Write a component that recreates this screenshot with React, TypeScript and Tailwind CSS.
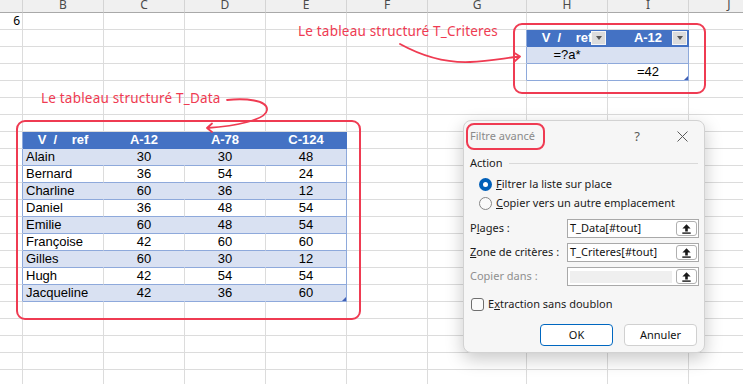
import React from "react";

const letters = ["", "B", "C", "D", "E", "F", "G", "H", "I", "J"];
const rows = Array.from({ length: 22 }, (_, i) => i + 6);

const people: [string, number, number, number][] = [
  ["Alain", 30, 30, 48],
  ["Bernard", 36, 54, 24],
  ["Charline", 60, 36, 12],
  ["Daniel", 36, 48, 54],
  ["Emilie", 60, 48, 54],
  ["Françoise", 42, 60, 60],
  ["Gilles", 60, 30, 12],
  ["Hugh", 42, 54, 54],
  ["Jacqueline", 42, 36, 60],
];

const dataHeads = ["V  /    ref", "A-12", "A-78", "C-124"];

function Dropdown() {
  return (
    <span className="absolute right-[1px] top-[1px] flex h-[14px] w-[15px] items-center justify-center border border-[#f6f6f6] bg-[#dcdcdc]">
      <span className="h-0 w-0 border-x-[3.5px] border-t-[4px] border-x-transparent border-t-[#555]" />
    </span>
  );
}

function Handle() {
  return (
    <span className="absolute bottom-0 right-0 h-0 w-0 border-b-[4px] border-l-[4px] border-b-[#3F5FB5] border-l-transparent" />
  );
}

function Cell({ r, c }: { r: number; c: number }) {
  const dataHeader = r === 13 && c >= 1 && c <= 4;
  const dataBody = r >= 14 && r <= 22 && c >= 1 && c <= 4;
  const critHeader = r === 7 && (c === 7 || c === 8);
  const critBody = (r === 8 || r === 9) && (c === 7 || c === 8);
  const banded = (dataBody && (r - 14) % 2 === 0) || (critBody && r === 8);
  const lastCol = (dataBody && c === 4) || (critBody && c === 8);
  const tableLeft = (c === 0 && r >= 13 && r <= 22) || (c === 6 && r >= 7 && r <= 9);

  let cls = "relative flex h-[17px] items-center overflow-hidden whitespace-pre border-b border-r ";
  if (dataHeader || critHeader) cls += "justify-center border-[#4472C4] bg-[#4472C4] font-bold text-white";
  else if (banded)
    cls += lastCol
      ? "border-b-[#8EA9DB] border-r-[#8EA9DB] bg-[#D9E1F2]"
      : "border-b-[#8EA9DB] border-r-[#D9E1F2] bg-[#D9E1F2]";
  else if (dataBody || critBody)
    cls += lastCol
      ? "border-b-[#8EA9DB] border-r-[#8EA9DB] bg-white"
      : "border-b-[#8EA9DB] border-r-[#dcdcdc] bg-white";
  else if (tableLeft) cls += "border-b-[#dcdcdc] border-r-[#8EA9DB] bg-white";
  else cls += "border-[#dcdcdc] bg-white";

  let content: React.ReactNode = null;
  if (c === 0 && r === 6) {
    content = (
      <span className="w-full pr-[2px] text-right font-['Noto_Sans',sans-serif] text-[12px] text-black">6</span>
    );
  } else if (dataHeader) {
    content = dataHeads[c - 1];
  } else if (dataBody) {
    const row = people[r - 14];
    content =
      c === 1 ? (
        <span className="w-full pl-[3px]">{row[0]}</span>
      ) : (
        <span className="w-full text-center">{row[c - 1]}</span>
      );
  } else if (critHeader) {
    content = c === 7 ? "V  /    ref" : "A-12";
  } else if (r === 8 && c === 7) {
    content = <span className="w-full text-center">=?a*</span>;
  } else if (r === 9 && c === 8) {
    content = <span className="w-full text-center">=42</span>;
  }

  return (
    <div className={cls}>
      {content}
      {critHeader && <Dropdown />}
      {((r === 22 && c === 4) || (r === 9 && c === 8)) && <Handle />}
    </div>
  );
}

function UpIcon() {
  return (
    <svg width="9" height="10" viewBox="0 0 9 10">
      <path d="M4.5 0.3 L8.6 4.6 H5.8 V7.4 H3.2 V4.6 H0.4 Z" fill="#1a1a1a" />
      <rect x="0.3" y="8.4" width="8.4" height="1.4" fill="#1a1a1a" />
    </svg>
  );
}

function Field({ value, disabled }: { value?: string; disabled?: boolean }) {
  return (
    <div className="flex h-[19px] w-[132px] items-center border border-[#a9a9a9] bg-white">
      {disabled ? (
        <span className="ml-[2px] h-[12px] w-[102px] bg-[#efefef]" />
      ) : (
        <span className="pl-[2px] text-[#111]">{value}</span>
      )}
      <span className="ml-auto mr-[1px] flex h-[15px] w-[21px] items-center justify-center rounded-[3px] border border-[#b0b0b0] bg-white">
        <UpIcon />
      </span>
    </div>
  );
}

function Dialog() {
  return (
    <div className="absolute left-[463px] top-[120px] flex h-[233px] w-[242px] flex-col rounded-[8px] border border-[#d2d2d2] bg-[#f6f6f6] font-['Noto_Sans',sans-serif] text-[11px] text-[#1b1b1b] shadow-[0_6px_18px_rgba(0,0,0,0.22)]">
      <div className="flex h-[30px] items-start pl-[2px] pt-[2px]">
        <div className="flex h-[27px] w-[79px] items-center rounded-[8px] border-2 border-[#EF3B52] pl-[2px] text-[#8a8a8a]">
          Filtre avancé
        </div>
        <span className="ml-[82px] flex h-[27px] w-[20px] items-center justify-center text-[13px] text-[#5a5a5a]">?</span>
        <span className="ml-[25px] flex h-[27px] w-[20px] items-center justify-center">
          <svg width="11" height="11" viewBox="0 0 11 11">
            <path d="M0.5 0.5 L10.5 10.5 M10.5 0.5 L0.5 10.5" stroke="#5a5a5a" strokeWidth="1" />
          </svg>
        </span>
      </div>

      <div className="flex flex-col pl-[6px]">
        <div className="mt-[4px] flex h-[16px] items-center">
          <span>Action</span>
          <span className="ml-[6px] mr-[6px] h-px flex-1 bg-[#d9d9d9]" />
        </div>

        <div className="mt-[4px] flex flex-col pl-[9px]">
          <div className="flex h-[19px] items-center gap-[4px]">
            <span className="flex h-[13px] w-[13px] items-center justify-center rounded-full bg-[#005FB8]">
              <span className="h-[5px] w-[5px] rounded-full bg-white" />
            </span>
            <span>
              <span className="underline">F</span>iltrer la liste sur place
            </span>
          </div>
          <div className="flex h-[19px] items-center gap-[4px]">
            <span className="h-[13px] w-[13px] rounded-full border border-[#868686] bg-[#fafafa]" />
            <span>
              <span className="underline">C</span>opier vers un autre emplacement
            </span>
          </div>
        </div>

        <div className="mt-[6px] flex flex-col gap-[5px]">
          <div className="flex items-center">
            <span className="w-[97px]">
              P<span className="underline">l</span>ages :
            </span>
            <Field value="T_Data[#tout]" />
          </div>
          <div className="flex items-center">
            <span className="w-[97px]">
              <span className="underline">Z</span>one de critères :
            </span>
            <Field value="T_Criteres[#tout]" />
          </div>
          <div className="flex items-center">
            <span className="w-[97px] text-[#8f8f8f]">Copier dans :</span>
            <Field disabled />
          </div>
        </div>

        <div className="mt-[9px] flex h-[19px] items-center gap-[4px] pl-[1px]">
          <span className="h-[13px] w-[13px] rounded-[3px] border border-[#6f6f6f] bg-[#fbfbfb]" />
          <span>
            E<span className="underline">x</span>traction sans doublon
          </span>
        </div>
      </div>

      <div className="mt-[10px] flex justify-end gap-[11px] pr-[7px]">
        <button className="h-[22px] w-[73px] rounded-[4px] border border-[#0067C0] bg-white text-[#111]">OK</button>
        <button className="h-[22px] w-[73px] rounded-[4px] border border-[#d0d0d0] bg-white text-[#111]">Annuler</button>
      </div>
    </div>
  );
}

export default function App() {
  return (
    <div className="relative h-[384px] w-[743px] overflow-hidden bg-white font-['Liberation_Sans',Arial,sans-serif] text-[13px] text-black">
      <div className="grid grid-cols-[23px_81px_81px_81px_81px_81px_99px_81px_81px_81px]">
        {letters.map((l, i) => (
          <div
            key={"h" + i}
            className="flex h-[13px] items-start justify-center overflow-hidden border-b border-r border-b-[#a9a9a9] border-r-[#d4d4d4] bg-[#f0f0f0] font-['Noto_Sans',sans-serif] text-[12px] leading-[9px] text-[#4a4a4a]"
          >
            {l}
          </div>
        ))}
        {rows.map((r) => letters.map((_, c) => <Cell key={r + "-" + c} r={r} c={c} />))}
      </div>

      {/* annotations */}
      <div className="absolute left-[16px] top-[120px] h-[200px] w-[345px] rounded-[9px] border-2 border-[#EF3B52]" />
      <div className="absolute left-[513px] top-[23px] h-[71px] w-[193px] rounded-[9px] border-2 border-[#EF3B52]" />
      <div className="absolute left-[41px] top-[89px] font-['Noto_Sans',sans-serif] text-[13.5px] leading-[18px] tracking-[0.2px] text-[#EF3B52]">
        Le tableau structuré T_Data
      </div>
      <div className="absolute left-[298px] top-[22px] font-['Noto_Sans',sans-serif] text-[13.5px] leading-[18px] tracking-[0.2px] text-[#EF3B52]">
        Le tableau structuré T_Criteres
      </div>
      <svg className="pointer-events-none absolute left-0 top-0" width="743" height="384" fill="none">
        <path
          d="M227 100 C245 98 268 100 267 110 C266 120 236 126 207 128 M212 123.5 L207 128 L212 132"
          stroke="#EF3B52"
          strokeWidth="1.8"
          strokeLinecap="round"
          strokeLinejoin="round"
        />
        <path
          d="M400 44 C420 55 445 63 470 62 C490 61 505 58 520 56.5 M514.5 53 L520 56.5 L515 61"
          stroke="#EF3B52"
          strokeWidth="1.8"
          strokeLinecap="round"
          strokeLinejoin="round"
        />
      </svg>

      <Dialog />
    </div>
  );
}
